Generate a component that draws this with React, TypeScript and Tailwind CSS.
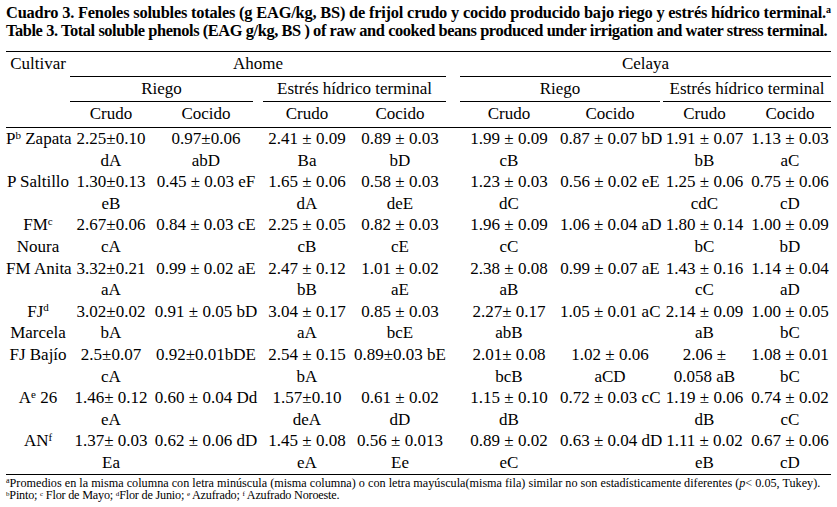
import React from "react";

type Row = { label: React.ReactNode[]; cells: string[][] };

const sup = "text-[11px]";

const rows: Row[] = [
  {
    label: [<>P<sup className={sup}>b</sup> Zapata</>],
    cells: [["2.25±0.10", "dA"], ["0.97±0.06", "abD"], ["2.41 ± 0.09", "Ba"], ["0.89 ± 0.03", "bD"], ["1.99 ± 0.09", "cB"], ["0.87 ± 0.07 bD"], ["1.91 ± 0.07", "bB"], ["1.13 ± 0.03", "aC"]],
  },
  {
    label: ["P Saltillo"],
    cells: [["1.30±0.13", "eB"], ["0.45 ± 0.03 eF"], ["1.65 ± 0.06", "dA"], ["0.58 ± 0.03", "deE"], ["1.23 ± 0.03", "dC"], ["0.56 ± 0.02 eE"], ["1.25 ± 0.06", "cdC"], ["0.75 ± 0.06", "cD"]],
  },
  {
    label: [<>FM<sup className={sup}>c</sup></>, "Noura"],
    cells: [["2.67±0.06", "cA"], ["0.84 ± 0.03 cE"], ["2.25 ± 0.05", "cB"], ["0.82 ± 0.03", "cE"], ["1.96 ± 0.09", "cC"], ["1.06 ± 0.04 aD"], ["1.80 ± 0.14", "bC"], ["1.00 ± 0.09", "bD"]],
  },
  {
    label: ["FM Anita"],
    cells: [["3.32±0.21", "aA"], ["0.99 ± 0.02 aE"], ["2.47 ± 0.12", "bB"], ["1.01 ± 0.02", "aE"], ["2.38 ± 0.08", "aB"], ["0.99 ± 0.07 aE"], ["1.43 ± 0.16", "cC"], ["1.14 ± 0.04", "aD"]],
  },
  {
    label: [<>FJ<sup className={sup}>d</sup></>, "Marcela"],
    cells: [["3.02±0.02", "bA"], ["0.91 ± 0.05 bD"], ["3.04 ± 0.17", "aA"], ["0.85 ± 0.03", "bcE"], ["2.27± 0.17", "abB"], ["1.05 ± 0.01 aC"], ["2.14 ± 0.09", "aB"], ["1.00 ± 0.05", "bC"]],
  },
  {
    label: ["FJ Bajío"],
    cells: [["2.5±0.07", "cA"], ["0.92±0.01bDE"], ["2.54 ± 0.15", "bA"], ["0.89±0.03 bE"], ["2.01± 0.08", "bcB"], ["1.02 ± 0.06", "aCD"], ["2.06 ±", "0.058 aB"], ["1.08 ± 0.01", "bC"]],
  },
  {
    label: [<>A<sup className={sup}>e</sup> 26</>],
    cells: [["1.46± 0.12", "eA"], ["0.60 ± 0.04 Dd"], ["1.57±0.10", "deA"], ["0.61 ± 0.02", "dD"], ["1.15 ± 0.10", "dB"], ["0.72 ± 0.03 cC"], ["1.19 ± 0.06", "dB"], ["0.74 ± 0.02", "cC"]],
  },
  {
    label: [<>AN<sup className={sup}>f</sup></>],
    cells: [["1.37± 0.03", "Ea"], ["0.62 ± 0.06 dD"], ["1.45 ± 0.08", "eA"], ["0.56 ± 0.013", "Ee"], ["0.89 ± 0.02", "eC"], ["0.63 ± 0.04 dD"], ["1.11 ± 0.02", "eB"], ["0.67 ± 0.06", "cD"]],
  },
];

const colStarts = ["col-start-2", "col-start-3", "col-start-4", "col-start-5", "col-start-7", "col-start-8", "col-start-9", "col-start-10"];
const cols = "grid grid-cols-[64px_82px_108px_94px_92px_12px_102px_100px_89px_82px]";
const hcell = "h-[25px] leading-[24px] text-center";

export default function App() {
  return (
    <div className="w-[837px] h-[507px] bg-white text-black px-[6px] [font-family:'Liberation_Serif',serif] overflow-hidden">
      <div className="pt-[4px] h-[51px] font-bold text-[16.4px] leading-[18px] whitespace-nowrap">
        <div className="tracking-[-0.2px]">
          Cuadro 3. Fenoles solubles totales (g EAG/kg, BS) de frijol crudo y cocido producido bajo riego y estrés hídrico terminal.<sup className="text-[10px]">a</sup>
        </div>
        <div className="tracking-[-0.42px]">
          Table 3. Total soluble phenols (EAG g/kg, BS ) of raw and cooked beans produced under irrigation and water stress terminal.
        </div>
      </div>
      <div className="border-t border-black" />
      <div className={`${cols} grid-rows-[25px_25px_25px] text-[17px] whitespace-nowrap`}>
        <div className={`col-start-1 row-start-1 ${hcell}`}>Cultivar</div>
        <div className={`col-start-2 col-span-4 row-start-1 ${hcell} border-b border-black`}>Ahome</div>
        <div className={`col-start-7 col-span-4 row-start-1 ${hcell} border-b border-black ml-[2px]`}>Celaya</div>
        <div className={`col-start-2 col-span-2 row-start-2 ${hcell} border-b border-black mr-[7px]`}>Riego</div>
        <div className={`col-start-4 col-span-2 row-start-2 ${hcell} border-b border-black ml-[3px]`}>Estrés hídrico terminal</div>
        <div className={`col-start-7 col-span-2 row-start-2 ${hcell} border-b border-black ml-[2px]`}>Riego</div>
        <div className={`col-start-9 col-span-2 row-start-2 ${hcell} border-b border-black ml-[3px]`}>Estrés hídrico terminal</div>
        {["Crudo", "Cocido", "Crudo", "Cocido", "Crudo", "Cocido", "Crudo", "Cocido"].map((t, i) => (
          <div key={i} className={`${colStarts[i]} row-start-3 ${hcell}`}>{t}</div>
        ))}
      </div>
      <div className="border-t border-black" />
      <div className="flex flex-col text-[17px] leading-[21.6px] whitespace-nowrap">
        {rows.map((r, ri) => (
          <div key={ri} className={`${cols} h-[43.2px]`}>
            <div className="col-start-1 text-center">
              {r.label.map((l, li) => (
                <div key={li}>{l}</div>
              ))}
            </div>
            {r.cells.map((c, ci) => (
              <div key={ci} className={`${colStarts[ci]} text-center`}>
                {c.map((l, li) => (
                  <div key={li}>{l}</div>
                ))}
              </div>
            ))}
          </div>
        ))}
      </div>
      <div className="border-t border-black" />
      <div className="pt-[2px] text-[12.2px] leading-[12.5px] whitespace-nowrap">
        <div>
          <sup className="text-[8px]">a</sup>Promedios en la misma columna con letra minúscula (misma columna) o con letra mayúscula(misma fila) similar no son estadísticamente diferentes (<i>p</i>&lt; 0.05, Tukey).
        </div>
        <div className="tracking-[-0.2px]">
          <sup className="text-[7px]">b</sup>Pinto; <sup className="text-[7px]">c</sup> Flor de Mayo; <sup className="text-[7px]">d</sup>Flor de Junio; <sup className="text-[7px]">e</sup> Azufrado; <sup className="text-[7px]">f</sup> Azufrado Noroeste.
        </div>
      </div>
    </div>
  );
}
